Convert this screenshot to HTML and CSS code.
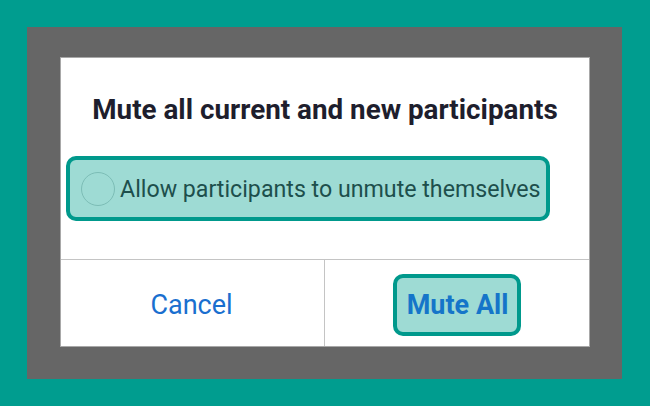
FILE: index.html
```html
<!DOCTYPE html>
<html>
<head>
<meta charset="utf-8">
<link rel="stylesheet" href="styles.css">
</head>
<body>
<div class="frame">
  <div class="backdrop">
    <div class="dialog">
      <div class="body">
        <h1 class="title">Mute all current and new participants</h1>
        <div class="option">
          <span class="radio"></span>
          <span class="option-label">Allow participants to unmute themselves</span>
        </div>
      </div>
      <div class="actions">
        <div class="cell"><span class="btn cancel">Cancel</span></div>
        <div class="cell divider"><span class="btn primary">Mute All</span></div>
      </div>
    </div>
  </div>
</div>
</body>
</html>
```
FILE: styles.css
```css
html, body {
  margin: 0;
  padding: 0;
}
body {
  width: 650px;
  height: 406px;
  font-family: Roboto, "Liberation Sans", sans-serif;
  background: #009d8f;
}
.frame {
  box-sizing: border-box;
  width: 650px;
  height: 406px;
  padding: 27px 28px 27px 27px;
  background: #009d8f;
}
.backdrop {
  box-sizing: border-box;
  height: 100%;
  padding: 30px 32px 32px 33px;
  background: #666666;
}
.dialog {
  box-sizing: border-box;
  height: 100%;
  background: #ffffff;
  border: 1px solid #a8a8a8;
  display: flex;
  flex-direction: column;
}
.body {
  height: 201px;
  box-sizing: border-box;
  padding-top: 35px;
}
.title {
  margin: 0;
  text-align: center;
  font-size: 27.8px;
  font-weight: 700;
  color: #1e1e2d;
  line-height: 34px;
}
.option {
  margin: 29px 0 0 5px;
  display: inline-flex;
  align-items: center;
  box-sizing: border-box;
  height: 65px;
  padding: 1px 5px 0 11px;
  background: #9edbd4;
  border: 4px solid #00998c;
  border-radius: 10px;
}
.radio {
  width: 34px;
  height: 34px;
  box-sizing: border-box;
  border: 1.5px solid #7cbdb6;
  border-radius: 50%;
  margin-right: 5px;
}
.option-label {
  font-size: 23.2px;
  color: #1d4f4c;
}
.actions {
  flex: 1;
  display: flex;
  border-top: 1px solid #c4c4c4;
  box-sizing: border-box;
  padding-top: 4px;
}
.cell {
  flex: 0 0 263px;
  display: flex;
  align-items: center;
  justify-content: center;
}
.cell.divider {
  flex: 1;
  border-left: 1px solid #c4c4c4;
  margin-top: -4px;
  padding-top: 4px;
}
.btn {
  font-size: 27px;
  color: #1a6fcf;
}
.cancel {
  margin-left: -2px;
}
.primary {
  font-weight: 700;
  color: #1575c9;
  box-sizing: border-box;
  height: 62px;
  display: inline-flex;
  align-items: center;
  padding: 0 9px 0 10px;
  background: #9edbd4;
  border: 4px solid #00998c;
  border-radius: 10px;
}
```
